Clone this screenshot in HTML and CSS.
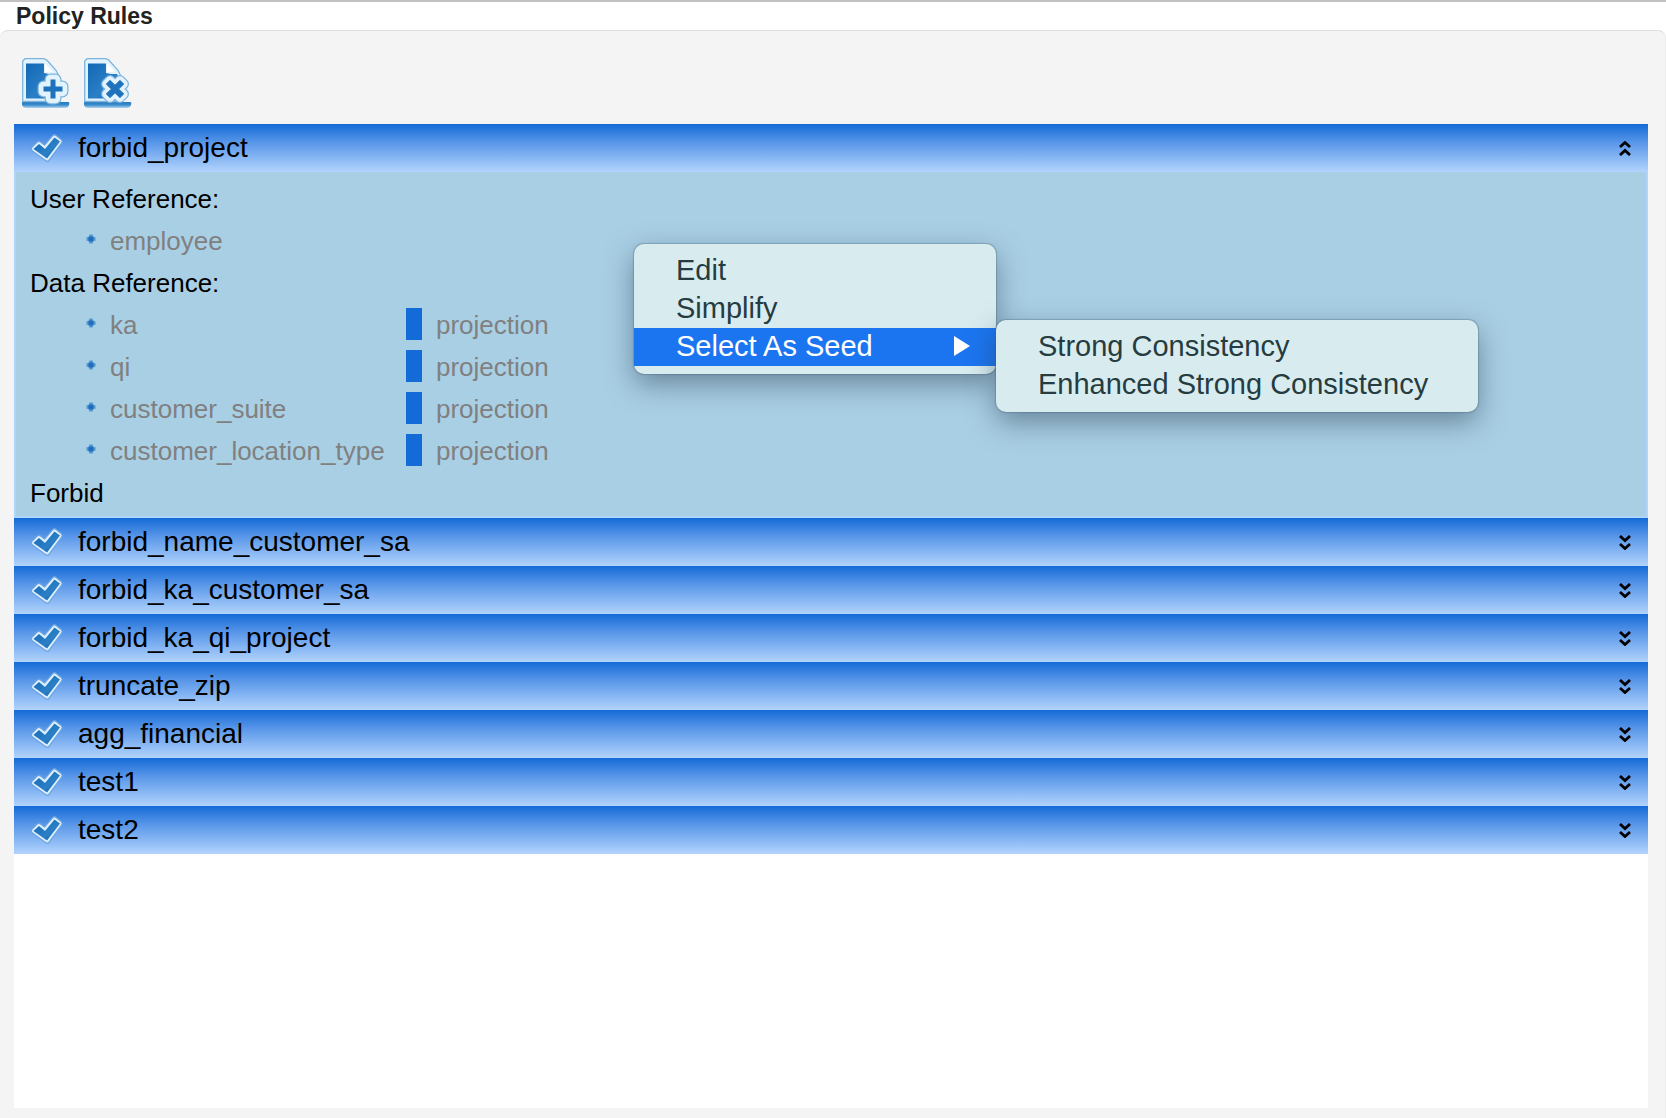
FILE: index.html
```html
<!DOCTYPE html>
<html lang="en">
<head>
<meta charset="utf-8">
<meta name="viewport" content="width=device-width, initial-scale=1">
<title>Policy Rules</title>
<link rel="stylesheet" href="styles.css">
</head>
<body>
<svg class="symbols" aria-hidden="true">
  <defs>
    <linearGradient id="ink" x1="0" y1="0" x2="1" y2="1">
      <stop offset="0" stop-color="#1268b4"/>
      <stop offset="0.6" stop-color="#2a7fc6"/>
      <stop offset="1" stop-color="#1268b4"/>
    </linearGradient>
    <radialGradient id="dot">
      <stop offset="0" stop-color="#0f5fb4"/>
      <stop offset="0.5" stop-color="#2f7cc4"/>
      <stop offset="1" stop-color="#8fbfe0"/>
    </radialGradient>
    <linearGradient id="base" x1="0" y1="0" x2="0" y2="1">
      <stop offset="0" stop-color="#2377bd"/>
      <stop offset="0.5" stop-color="#3c8dcc"/>
      <stop offset="1" stop-color="#b5d6ee"/>
    </linearGradient>
  </defs>
  <symbol id="page" viewBox="0 0 48 50">
    <path d="M0 44h46q2 0 1 3t-4 3H4q-3 0-4-3z" fill="url(#base)"/>
    <path d="M3 .7h19l3 1.600 9 10 3 6V43.500H.7V3z" fill="#e3f3fd" stroke="#7db4dc" stroke-width="1.300"/>
    <path d="M4 5.500h18V15l5 1h6l2 4v20.500H4z" fill="url(#ink)"/>
    <path d="M23 5v9h8z" fill="#fff"/>
  </symbol>
  <symbol id="plus" viewBox="0 0 48 50">
    <path d="M28.500 21.500h5v7h7v5h-7v7h-5v-7h-7v-5h7z"/>
  </symbol>
  <symbol id="check" viewBox="0 0 34 30">
    <path d="M5 16l5-5 6 4.500L25.500 4.500l5 4L18 25.500z" fill="none" stroke="#6ba3e0" stroke-width="6.500" stroke-linejoin="round"/>
    <path d="M5 16l5-5 6 4.500L25.500 4.500l5 4L18 25.500z" fill="url(#ink)" stroke="#deeffc" stroke-width="4" stroke-linejoin="round"/>
    <path d="M4.500 16l5.500-5 6 5L25.500 4.500l5.500 4L18 25.500z" fill="url(#ink)"/>
  </symbol>
  <symbol id="bullet" viewBox="0 0 10 10">
    <path d="M3 0h4v2l1 1h2v4H8L7 8v2H3V8L2 7H0V3h2l1-1z" fill="url(#dot)"/>
  </symbol>
  <symbol id="expand" viewBox="0 0 12 15">
    <path d="M1 1l5 4.500L11 1M1 9l5 4.500L11 9" fill="none" stroke="#000" stroke-width="2.800"/>
  </symbol>
  <symbol id="collapse" viewBox="0 0 12 15">
    <path d="M1 6l5-4.500L11 6M1 14l5-4.500L11 14" fill="none" stroke="#000" stroke-width="2.800"/>
  </symbol>
</svg>

<main class="window">
  <h1 class="title">Policy Rules</h1>
  <section class="panel">
    <div class="toolbar">
      <button class="tool" type="button" aria-label="Add rule">
        <svg viewBox="0 0 48 50"><use href="#page"/>
          <g stroke-linejoin="round">
            <use href="#plus" width="48" height="50" stroke="#7db4dc" stroke-width="12"/>
            <use href="#plus" width="48" height="50" stroke="#e3f3fd" stroke-width="9.500"/>
            <use href="#plus" width="48" height="50" fill="#1d72bb"/>
          </g>
        </svg>
      </button>
      <button class="tool" type="button" aria-label="Delete rule">
        <svg viewBox="0 0 48 50"><use href="#page"/>
          <g stroke-linejoin="round" transform="rotate(45 31 31)">
            <use href="#plus" width="48" height="50" stroke="#7db4dc" stroke-width="11"/>
            <use href="#plus" width="48" height="50" stroke="#e3f3fd" stroke-width="8.500"/>
            <use href="#plus" width="48" height="50" fill="#1d72bb" stroke="#1d72bb" stroke-width="1"/>
          </g>
        </svg>
      </button>
    </div>

    <div class="rules">
      <article class="rule">
        <button class="rule-head" type="button" aria-expanded="true">
          <svg class="check"><use href="#check"/></svg><span class="name">forbid_project</span><svg class="chevron"><use href="#collapse"/></svg>
        </button>
        <div class="rule-body">
          <p class="label">User Reference:</p>
          <ul class="refs">
            <li class="ref"><svg class="bullet"><use href="#bullet"/></svg><span>employee</span></li>
          </ul>
          <p class="label">Data Reference:</p>
          <ul class="refs">
            <li class="ref"><svg class="bullet"><use href="#bullet"/></svg><span>ka</span><i class="bar"></i><span>projection</span></li>
            <li class="ref"><svg class="bullet"><use href="#bullet"/></svg><span>qi</span><i class="bar"></i><span>projection</span></li>
            <li class="ref"><svg class="bullet"><use href="#bullet"/></svg><span>customer_suite</span><i class="bar"></i><span>projection</span></li>
            <li class="ref"><svg class="bullet"><use href="#bullet"/></svg><span>customer_location_type</span><i class="bar"></i><span>projection</span></li>
          </ul>
          <p class="label">Forbid</p>

          <ul class="menu context-menu" role="menu">
            <li role="none"><button class="menu-item" type="button" role="menuitem">Edit</button></li>
            <li role="none"><button class="menu-item" type="button" role="menuitem">Simplify</button></li>
            <li class="has-submenu" role="none">
              <button class="menu-item selected" type="button" role="menuitem" aria-haspopup="true" aria-expanded="true">Select As Seed
                <svg class="arrow" viewBox="0 0 16 20"><path d="M0 0l16 10L0 20z" fill="#fff"/></svg>
              </button>
              <ul class="menu submenu" role="menu">
                <li role="none"><button class="menu-item" type="button" role="menuitem">Strong Consistency</button></li>
                <li role="none"><button class="menu-item" type="button" role="menuitem">Enhanced Strong Consistency</button></li>
              </ul>
            </li>
          </ul>
        </div>
      </article>
      <article class="rule"><button class="rule-head" type="button" aria-expanded="false"><svg class="check"><use href="#check"/></svg><span class="name">forbid_name_customer_sa</span><svg class="chevron"><use href="#expand"/></svg></button></article>
      <article class="rule"><button class="rule-head" type="button" aria-expanded="false"><svg class="check"><use href="#check"/></svg><span class="name">forbid_ka_customer_sa</span><svg class="chevron"><use href="#expand"/></svg></button></article>
      <article class="rule"><button class="rule-head" type="button" aria-expanded="false"><svg class="check"><use href="#check"/></svg><span class="name">forbid_ka_qi_project</span><svg class="chevron"><use href="#expand"/></svg></button></article>
      <article class="rule"><button class="rule-head" type="button" aria-expanded="false"><svg class="check"><use href="#check"/></svg><span class="name">truncate_zip</span><svg class="chevron"><use href="#expand"/></svg></button></article>
      <article class="rule"><button class="rule-head" type="button" aria-expanded="false"><svg class="check"><use href="#check"/></svg><span class="name">agg_financial</span><svg class="chevron"><use href="#expand"/></svg></button></article>
      <article class="rule"><button class="rule-head" type="button" aria-expanded="false"><svg class="check"><use href="#check"/></svg><span class="name">test1</span><svg class="chevron"><use href="#expand"/></svg></button></article>
      <article class="rule"><button class="rule-head" type="button" aria-expanded="false"><svg class="check"><use href="#check"/></svg><span class="name">test2</span><svg class="chevron"><use href="#expand"/></svg></button></article>
    </div>
  </section>
</main>
</body>
</html>
```
FILE: styles.css
```css
* {
  box-sizing: border-box;
  margin: 0;
  padding: 0;
}

body {
  font-family: "Liberation Sans", Arial, sans-serif;
  font-size: 26px;
  color: #000;
  background: #fff;
}

button {
  border: 0;
  background: none;
  font: inherit;
  color: inherit;
  text-align: left;
}

ul {
  list-style: none;
}

svg {
  display: block;
  flex: none;
}

.symbols {
  position: absolute;
  width: 0;
  height: 0;
}

.window {
  display: flex;
  flex-direction: column;
  min-height: 100vh;
  border-top: 2px solid #c1c1c1;
}

.title {
  padding-left: 16px;
  font-size: 23px;
  line-height: 28px;
  color: #222;
}

.panel {
  flex: 1;
  display: flex;
  flex-direction: column;
  padding: 0 17px 10px 14px;
  border-top: 1px solid #dedede;
  border-right: 1px solid #ebebeb;
  border-radius: 8px 8px 0 0;
  background: #f4f4f4;
}

.toolbar {
  display: flex;
  gap: 14px;
  padding: 27px 8px 16px;
}

.tool svg {
  width: 48px;
  height: 50px;
}

.rules {
  flex: 1;
  background: #fff;
}

.rule-head {
  display: flex;
  align-items: center;
  width: 100%;
  height: 48px;
  padding: 0 17px 0 15px;
  font-size: 28px;
  background: linear-gradient(#146bd7, #5b98e9 40%, #b2d4fd);
}

.check {
  width: 34px;
  height: 30px;
}

.name {
  flex: 1;
  padding-left: 15px;
}

.chevron {
  width: 12px;
  height: 15px;
}

.rule-body {
  position: relative;
  padding: 6px 14px 2px;
  border: solid #aed5fb;
  border-width: 0 2px 2px;
  line-height: 42px;
  background: #a9cfe5;
}

.refs {
  padding-left: 56px;
  color: #808080;
}

.ref {
  display: grid;
  grid-template-columns: 24px 296px 30px auto;
  align-items: center;
}

.bullet {
  width: 10px;
  height: 10px;
  margin-bottom: 4px;
}

.bar {
  width: 16px;
  height: 32px;
  margin-bottom: 2px;
  background: #126bd7;
}

.menu {
  position: absolute;
  padding: 8px 0;
  border-radius: 10px;
  font-size: 29px;
  line-height: 36px;
  color: #263c40;
  background: #d8ecf0;
  box-shadow: 0 0 1px 1px rgba(60, 90, 110, 0.3), 0 10px 28px rgba(40, 60, 80, 0.5);
}

.context-menu {
  top: 72px;
  left: 618px;
  width: 362px;
}

.has-submenu {
  position: relative;
}

.submenu {
  top: -8px;
  left: 100%;
  width: 482px;
}

.menu-item {
  display: flex;
  align-items: center;
  justify-content: space-between;
  width: 100%;
  padding: 0 26px 2px 42px;
  white-space: nowrap;
}

.selected {
  color: #fff;
  background: #1c75f0;
}

.arrow {
  width: 16px;
  height: 20px;
}
```
